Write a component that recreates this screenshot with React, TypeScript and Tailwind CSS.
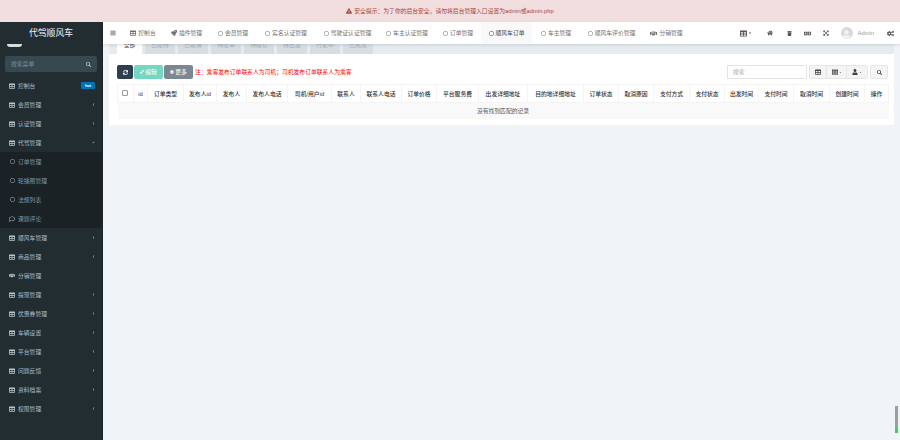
import {
  FaBars,
  FaCaretDown,
  FaChevronDown,
  FaChevronLeft,
  FaCog,
  FaCogs,
  FaExclamationTriangle,
  FaExpandArrowsAlt,
  FaHandshake,
  FaHome,
  FaLanguage,
  FaPencilAlt,
  FaRegCircle,
  FaRegComment,
  FaRocket,
  FaSearch,
  FaSync,
  FaTable,
  FaTh,
  FaTrash,
  FaUser,
} from "react-icons/fa";

type SideItem = {
  label: string;
  icon?: "table" | "circle" | "comment" | "hand";
  arrow?: "left" | "down";
  hot?: boolean;
};

const topItems: SideItem[] = [
  { label: "控制台", hot: true },
  { label: "会员管理", arrow: "left" },
  { label: "认证管理", arrow: "left" },
  { label: "代驾管理", arrow: "down" },
];

const subItems: SideItem[] = [
  { label: "订单管理", icon: "circle" },
  { label: "轮播图管理", icon: "circle" },
  { label: "法规列表", icon: "circle" },
  { label: "课题评论", icon: "comment" },
];

const bottomItems: SideItem[] = [
  { label: "顺风车管理", arrow: "left" },
  { label: "商品管理", arrow: "left" },
  { label: "分销管理", icon: "hand" },
  { label: "提现管理", arrow: "left" },
  { label: "优惠券管理", arrow: "left" },
  { label: "车辆设置", arrow: "left" },
  { label: "平台管理", arrow: "left" },
  { label: "问题反馈", arrow: "left" },
  { label: "资料档案", arrow: "left" },
  { label: "权限管理", arrow: "left" },
];

const navItems = [
  { label: "控制台", icon: "table", width: "w-[40px]" },
  { label: "插件管理", icon: "rocket", width: "w-[47px]" },
  { label: "会员管理", icon: "circle", width: "w-[46px]" },
  { label: "实名认证管理", icon: "circle", width: "w-[60px]" },
  { label: "驾驶证认证管理", icon: "circle", width: "w-[63px]" },
  { label: "车主认证管理", icon: "circle", width: "w-[56px]" },
  { label: "订单管理", icon: "circle", width: "w-[46px]" },
  { label: "顺风车订单", icon: "circle", width: "w-[51px]", active: true },
  { label: "车主管理", icon: "circle", width: "w-[48px]" },
  { label: "顺风车评价管理", icon: "circle", width: "w-[63px]" },
  { label: "分销管理", icon: "hand", width: "w-[47px]" },
];

const tabs = [
  { label: "全部", width: "w-[25px]", active: true },
  { label: "已接待", width: "w-[30px]" },
  { label: "已取消", width: "w-[30px]" },
  { label: "待接单", width: "w-[30px]" },
  { label: "待确认", width: "w-[30px]" },
  { label: "待出发", width: "w-[30px]" },
  { label: "行驶中", width: "w-[30px]" },
  { label: "已完成", width: "w-[30px]" },
];

const columns = [
  { label: "id", width: "w-[14px]" },
  { label: "订单类型", width: "w-[36px]" },
  { label: "发布人id", width: "w-[33px]" },
  { label: "发布人", width: "w-[30px]" },
  { label: "发布人电话", width: "w-[41px]" },
  { label: "司机/用户id", width: "w-[44px]" },
  { label: "联系人", width: "w-[29px]" },
  { label: "联系人电话", width: "w-[41px]" },
  { label: "订单价格", width: "w-[35px]" },
  { label: "平台服务费", width: "w-[42px]" },
  { label: "出发详细地址", width: "w-[49px]" },
  { label: "目的地详细地址", width: "w-[56px]" },
  { label: "订单状态", width: "w-[35px]" },
  { label: "取消原因", width: "w-[35px]" },
  { label: "支付方式", width: "w-[36px]" },
  { label: "支付状态", width: "w-[35px]" },
  { label: "出发时间", width: "w-[34px]" },
  { label: "支付时间", width: "w-[35px]" },
  { label: "取消时间", width: "w-[36px]" },
  { label: "创建时间", width: "w-[35px]" },
  { label: "操作", width: "w-[24px]" },
];

function SideIcon({ icon }: { icon?: SideItem["icon"] }) {
  if (icon === "circle") return <FaRegCircle className="w-[5px] h-[5px] text-[#a9b8bf]" />;
  if (icon === "comment") return <FaRegComment className="w-[6px] h-[6px] text-[#a9b8bf]" />;
  if (icon === "hand") return <FaHandshake className="w-[7px] h-[7px] text-[#b8c7ce]" />;
  return <FaTable className="w-[6px] h-[6px] text-[#b8c7ce]" />;
}

function SideRow({ item, sub }: { item: SideItem; sub?: boolean }) {
  return (
    <div className="h-[19px] flex items-center pl-[9px] pr-[7px] gap-[3px]">
      <span className="w-[6px] flex justify-center shrink-0">
        <SideIcon icon={item.icon} />
      </span>
      <span className={sub ? "flex-1 text-[#8196a0]" : "flex-1 text-[#adbcc3]"}>{item.label}</span>
      {item.hot && (
        <span className="w-[14px] h-[7px] rounded-[1px] bg-[#0073b7] text-white text-[4px] font-bold leading-[7px] text-center">
          hot
        </span>
      )}
      {item.arrow === "left" && <FaChevronLeft className="w-[3px] h-[3px] text-[#b8c7ce]" />}
      {item.arrow === "down" && <FaChevronDown className="w-[3px] h-[3px] text-[#b8c7ce]" />}
    </div>
  );
}

function NavIcon({ icon }: { icon: string }) {
  if (icon === "table") return <FaTable className="w-[6px] h-[6px]" />;
  if (icon === "rocket") return <FaRocket className="w-[6px] h-[6px]" />;
  if (icon === "hand") return <FaHandshake className="w-[7px] h-[7px]" />;
  return <FaRegCircle className="w-[5px] h-[5px]" />;
}

export default function App() {
  return (
    <div className="w-[900px] h-[440px] overflow-hidden relative flex flex-col bg-[#f0f3f7] text-[5.8px] leading-[8px] font-['Liberation_Sans','Noto_Sans_CJK_SC',sans-serif]">
      <div className="h-[22px] shrink-0 bg-[#f2dede] text-[#a94442] flex items-center justify-center gap-[2px]">
        <FaExclamationTriangle className="w-[6px] h-[6px]" />
        <span>安全提示：为了你的后台安全，请勿将后台管理入口设置为admin或admin.php</span>
      </div>

      <div className="flex flex-1 min-h-0">
        <aside className="w-[103px] shrink-0 bg-[#222d32] border-r border-[#1b2327] flex flex-col overflow-hidden">
          <div className="h-[22px] shrink-0 flex items-center justify-center text-[#f2f4f5] text-[8.8px]">代驾顺风车</div>
          <div className="h-[3px] shrink-0 pl-[7px]">
            <div className="w-[15px] h-[3px] rounded-b-full bg-[#d8dcdd]" />
          </div>
          <div className="mx-[5px] mt-[9px] h-[16px] shrink-0 rounded-[2px] bg-[#374850] flex items-center justify-between px-[6px] text-[#7f939d]">
            <span>搜索菜单</span>
            <FaSearch className="w-[5px] h-[5px] text-[#b8c7ce]" />
          </div>
          <div className="mt-[4px]">
            {topItems.map((item) => (
              <SideRow key={item.label} item={item} />
            ))}
            <div className="bg-[#1a2226] h-[76px]">
              {subItems.map((item) => (
                <SideRow key={item.label} item={item} sub />
              ))}
            </div>
            {bottomItems.map((item) => (
              <SideRow key={item.label} item={item} />
            ))}
          </div>
        </aside>

        <main className="flex-1 min-w-0 flex flex-col">
          <nav className="h-[22px] shrink-0 bg-white shadow-[0_1px_3px_rgba(0,0,0,0.12)] relative z-10 flex items-center text-[#707070]">
            <span className="w-[20px] flex justify-center">
              <FaBars className="w-[6px] h-[6px] text-[#555]" />
            </span>
            {navItems.map((item) => (
              <div
                key={item.label}
                className={`${item.width} h-full shrink-0 flex items-center justify-center gap-[2px] whitespace-nowrap ${
                  item.active ? "bg-[#f9f9f9] text-[#444]" : ""
                }`}
              >
                <NavIcon icon={item.icon} />
                <span>{item.label}</span>
              </div>
            ))}
            <div className="flex-1 flex items-center justify-end gap-[10px] pr-[6px] text-[#555]">
              <span className="flex items-center gap-[1px]">
                <FaTable className="w-[7px] h-[7px]" />
                <FaCaretDown className="w-[4px] h-[4px]" />
              </span>
              <FaHome className="w-[6px] h-[6px] ml-[5px]" />
              <FaTrash className="w-[5px] h-[5px] ml-[4px]" />
              <FaLanguage className="w-[7px] h-[7px] ml-[2px]" />
              <FaExpandArrowsAlt className="w-[6px] h-[6px] ml-[2px]" />
              <span className="flex items-center gap-[5px] ml-[2px] text-[#999]">
                <span className="w-[12px] h-[12px] rounded-full bg-[#d9d9d9] flex items-end justify-center overflow-hidden">
                  <FaUser className="w-[9px] h-[9px] text-[#f2f2f2]" />
                </span>
                <span>Admin</span>
              </span>
              <FaCogs className="w-[7px] h-[7px] ml-[3px]" />
            </div>
          </nav>

          <div className="pl-[6px] pr-[6px]">
            <div className="h-[10px] bg-[#e6ebef] flex gap-[3px] pl-[8px] overflow-hidden">
              {tabs.map((tab) => (
                <div
                  key={tab.label}
                  className={`${tab.width} shrink-0 text-center leading-[2px] ${
                    tab.active ? "bg-white text-[#555]" : "bg-[#d6dee4] text-[#a8b2ba]"
                  }`}
                >
                  {tab.label}
                </div>
              ))}
            </div>

            <section className="bg-white pl-[8px] pr-[6px] pt-[11px] h-[71px]">
              <div className="flex items-center h-[14px]">
                <button className="w-[16px] h-[14px] rounded-[2px] bg-[#2c3e50] text-white flex items-center justify-center">
                  <FaSync className="w-[5px] h-[5px]" />
                </button>
                <button className="ml-[1px] w-[29px] h-[14px] rounded-[2px] bg-[#74d7c3] text-white flex items-center justify-center gap-[1px]">
                  <FaPencilAlt className="w-[4px] h-[4px]" />
                  编辑
                </button>
                <button className="ml-[1px] w-[29px] h-[14px] rounded-[2px] bg-[#7b8793] text-white flex items-center justify-center gap-[1px]">
                  <FaCog className="w-[4px] h-[4px]" />
                  更多
                </button>
                <span className="ml-[2px] text-[#ff0000] whitespace-nowrap">注：乘客发布订单联系人为司机；司机发布订单联系人为乘客</span>
                <div className="ml-auto flex items-center">
                  <div className="w-[80px] h-[14px] border border-[#e3e3e3] rounded-[1px] px-[5px] leading-[12px] text-[#aaa]">搜索</div>
                  <div className="ml-[2px] h-[14px] w-[59px] flex rounded-[2px] bg-[#f4f4f4] border border-[#e6e6e6] text-[#444]">
                    <span className="w-[17px] flex items-center justify-center border-r border-[#e6e6e6]">
                      <FaTable className="w-[6px] h-[6px]" />
                    </span>
                    <span className="w-[20px] flex items-center justify-center gap-[1px] border-r border-[#e6e6e6]">
                      <FaTh className="w-[6px] h-[6px]" />
                      <FaCaretDown className="w-[3px] h-[3px]" />
                    </span>
                    <span className="flex-1 flex items-center justify-center gap-[1px]">
                      <FaUser className="w-[6px] h-[6px]" />
                      <FaCaretDown className="w-[3px] h-[3px]" />
                    </span>
                  </div>
                  <div className="ml-[2px] w-[18px] h-[14px] rounded-[2px] bg-[#f4f4f4] border border-[#e6e6e6] flex items-center justify-center text-[#444]">
                    <FaSearch className="w-[5px] h-[5px]" />
                  </div>
                </div>
              </div>

              <table className="mt-[5px] w-[771px] table-fixed border-collapse">
                <thead>
                  <tr className="h-[18px] text-[#333]">
                    <th className="w-[16px] border border-[#f4f4f4] font-normal">
                      <span className="block w-[6px] h-[6px] mx-auto -translate-x-[1px] -translate-y-[1px] border border-[#999] rounded-[1px] bg-white" />
                    </th>
                    {columns.map((col) => (
                      <th key={col.label} className={`${col.width} border border-[#f4f4f4] font-medium whitespace-nowrap overflow-hidden`}>
                        {col.label}
                      </th>
                    ))}
                  </tr>
                </thead>
                <tbody>
                  <tr className="h-[16px] bg-[#f9f9f9]">
                    <td colSpan={22} className="text-center text-[#555]">
                      没有找到匹配的记录
                    </td>
                  </tr>
                </tbody>
              </table>
            </section>
          </div>
        </main>
      </div>

      <div className="absolute left-[895px] top-[406px] w-[3px] h-[27px] flex flex-col">
        <div className="flex-1 bg-[#9aa09c]" />
        <div className="h-[5px] bg-[#35d45e]" />
      </div>
    </div>
  );
}
